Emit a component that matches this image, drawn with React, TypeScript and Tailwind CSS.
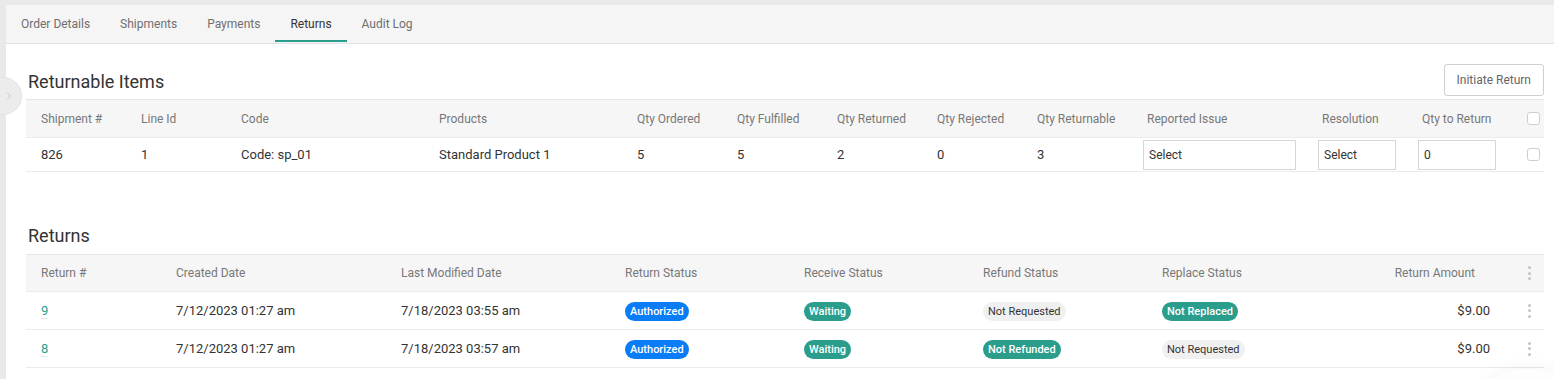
import React from "react";
import { ChevronRight } from "lucide-react";

const tabs = ["Order Details", "Shipments", "Payments", "Returns", "Audit Log"];

const itemCols = "grid-cols-[100px_100px_198px_198px_100px_100px_100px_100px_110px_175px_100px_105px_32px]";
const returnCols = "grid-cols-[135px_225px_224px_179px_179px_179px_179px_179px_39px]";

const Checkbox = () => (
  <span className="ml-[15px] block h-[13px] w-[13px] rounded-[3px] border border-[#cfcfcf] bg-white" />
);

const Kebab = () => (
  <div className="flex flex-col items-center gap-[2.5px] pl-[9px]">
    <span className="h-[3px] w-[3px] rounded-full bg-[#c4c4c4]" />
    <span className="h-[3px] w-[3px] rounded-full bg-[#c4c4c4]" />
    <span className="h-[3px] w-[3px] rounded-full bg-[#c4c4c4]" />
  </div>
);

type Tone = "blue" | "teal" | "gray";

const Badge = ({ tone, children }: { tone: Tone; children: React.ReactNode }) => {
  const cls =
    tone === "blue"
      ? "bg-[#0a7cf6] text-white font-medium"
      : tone === "teal"
      ? "bg-[#2a9d8d] text-white font-medium"
      : "bg-[#f0f0f0] text-[#333]";
  return (
    <span className={`inline-flex h-[19px] items-center rounded-full px-[5px] text-[11px] leading-none ${cls}`}>
      {children}
    </span>
  );
};

const returns = [
  {
    id: "9",
    created: "7/12/2023 01:27 am",
    modified: "7/18/2023 03:55 am",
    refund: <Badge tone="gray">Not Requested</Badge>,
    replace: <Badge tone="teal">Not Replaced</Badge>,
  },
  {
    id: "8",
    created: "7/12/2023 01:27 am",
    modified: "7/18/2023 03:57 am",
    refund: <Badge tone="teal">Not Refunded</Badge>,
    replace: <Badge tone="gray">Not Requested</Badge>,
  },
];

export default function App() {
  return (
    <div className="relative h-[379px] w-[1554px] overflow-hidden bg-[#e9e9e9] pl-[6px] pt-[5px] font-[Roboto,sans-serif] text-[#333]">
      {/* Tabs */}
      <div className="flex h-[39px] border-b border-[#e2e2e2] bg-[#f5f5f5]">
        {tabs.map((t) => (
          <div
            key={t}
            className={`relative flex items-center px-[15px] text-[12px] ${
              t === "Returns" ? "text-[#333]" : "text-[#6f6f6f]"
            }`}
          >
            {t}
            {t === "Returns" && (
              <span className="absolute bottom-[1px] left-0 right-0 h-[2px] bg-[#2a9d8d]" />
            )}
          </div>
        ))}
      </div>

      {/* Panel */}
      <div className="h-full bg-white pl-[20px] pr-[10px] pt-[20px]">
        <div className="mb-[3px] flex h-[32px] items-center justify-between">
          <h2 className="pl-[2px] pt-[3px] text-[18px] text-[#333]">Returnable Items</h2>
          <button className="h-[32px] rounded-[3px] border border-[#cfcfcf] bg-white px-[12px] text-[12px] text-[#666]">
            Initiate Return
          </button>
        </div>

        {/* Returnable items table */}
        <div className={`grid ${itemCols} h-[38px] items-center border-t border-[#e6e6e6] bg-[#f6f6f6] text-[12px] text-[#787878]`}>
          {[
            "Shipment #",
            "Line Id",
            "Code",
            "Products",
            "Qty Ordered",
            "Qty Fulfilled",
            "Qty Returned",
            "Qty Rejected",
            "Qty Returnable",
            "Reported Issue",
            "Resolution",
            "Qty to Return",
          ].map((h) => (
            <div key={h} className="pl-[15px]">
              {h}
            </div>
          ))}
          <Checkbox />
        </div>
        <div className={`grid ${itemCols} h-[35px] items-center border-y border-[#ebebeb] text-[13px]`}>
          {["826", "1", "Code: sp_01", "Standard Product 1", "5", "5", "2", "0", "3"].map((c, i) => (
            <div key={i} className="pl-[15px]">
              {c}
            </div>
          ))}
          <div className="pl-[11px]">
            <div className="flex h-[30px] w-[153px] items-center border border-[#d6d6d6] pl-[5px] text-[12px]">Select</div>
          </div>
          <div className="pl-[11px]">
            <div className="flex h-[30px] w-[78px] items-center border border-[#d6d6d6] pl-[5px] text-[12px]">Select</div>
          </div>
          <div className="pl-[11px]">
            <div className="flex h-[30px] w-[78px] items-center border border-[#d6d6d6] pl-[5px] text-[12px]">0</div>
          </div>
          <Checkbox />
        </div>

        <h2 className="mb-[5px] mt-[51px] pl-[2px] text-[18px] leading-[26px] text-[#333]">Returns</h2>

        {/* Returns table */}
        <div className={`grid ${returnCols} h-[37px] items-center border-t border-[#e6e6e6] bg-[#f6f6f6] text-[12px] text-[#787878]`}>
          {["Return #", "Created Date", "Last Modified Date", "Return Status", "Receive Status", "Refund Status", "Replace Status"].map(
            (h) => (
              <div key={h} className="pl-[15px]">
                {h}
              </div>
            )
          )}
          <div className="pr-[30px] text-right">Return Amount</div>
          <Kebab />
        </div>
        {returns.map((r) => (
          <div key={r.id} className={`grid ${returnCols} h-[38px] items-center border-t border-[#ebebeb] text-[13px]`}>
            <div className="pl-[15px]">
              <span className="text-[#2a9d8d] underline decoration-[#e0eeec] underline-offset-[3px]">{r.id}</span>
            </div>
            <div className="pl-[15px]">{r.created}</div>
            <div className="pl-[15px]">{r.modified}</div>
            <div className="pl-[15px]">
              <Badge tone="blue">Authorized</Badge>
            </div>
            <div className="pl-[15px]">
              <Badge tone="teal">Waiting</Badge>
            </div>
            <div className="pl-[15px]">{r.refund}</div>
            <div className="pl-[15px]">{r.replace}</div>
            <div className="pr-[15px] text-right">$9.00</div>
            <Kebab />
          </div>
        ))}
        <div className="h-0 w-[1518px] border-t border-[#ebebeb]" />
      </div>

      {/* Side collapse handle */}
      <div className="absolute left-[1px] top-[88px] h-[17px] w-[1px] bg-[#c9c9c9]" />
      <div className="absolute left-[-16px] top-[77px] flex h-[38px] w-[38px] items-center justify-end rounded-full border border-[#e0e0e0] bg-[#ececec] pr-[6px]">
        <ChevronRight size={12} strokeWidth={1.5} className="text-[#b5b5b5]" />
      </div>

      {/* faint floating shadow at bottom right */}
      <div className="absolute bottom-[-60px] right-[-20px] h-[70px] w-[90px] rounded-full bg-[#fdfdfd] shadow-[0_0_18px_rgba(0,0,0,0.05)]" />
    </div>
  );
}
